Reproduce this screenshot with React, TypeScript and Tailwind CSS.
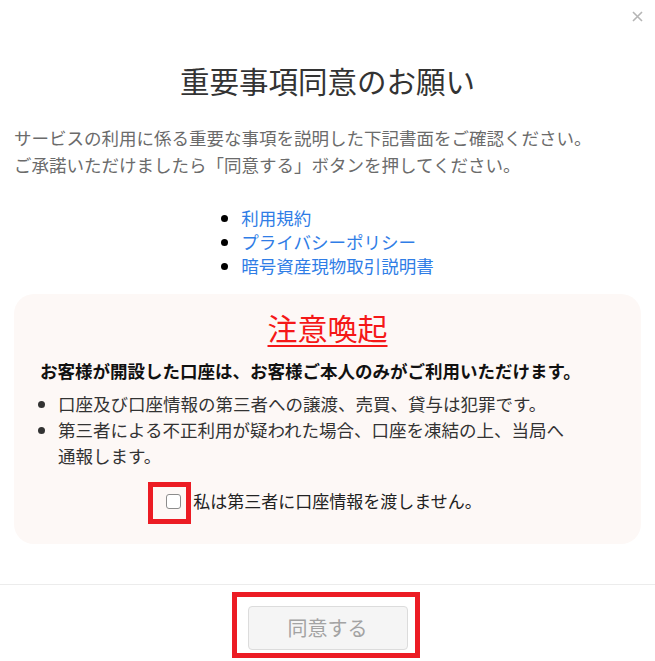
import React, { useState } from 'react';

const FONT = { fontFamily: '"Noto Sans CJK JP", "Noto Sans", sans-serif' };

const documents = ['利用規約', 'プライバシーポリシー', '暗号資産現物取引説明書'];

const notices = [
    '口座及び口座情報の第三者への譲渡、売買、貸与は犯罪です。',
    '第三者による不正利用が疑われた場合、口座を凍結の上、当局へ通報します。',
];

const CloseIcon: React.FC = () => (
    <svg width="11" height="11" viewBox="0 0 11 11" fill="none" stroke="#b5b5b5" strokeWidth="1.6">
        <path d="M1 1 L10 10 M10 1 L1 10" />
    </svg>
);

const App: React.FC = () => {
    const [agreed, setAgreed] = useState(false);

    return (
        <div className="w-[655px] h-[661px] bg-white overflow-hidden" style={FONT}>
            {/* Close button */}
            <div className="flex justify-end pt-[11px] pr-[12px] h-[22px]">
                <button className="leading-none"><CloseIcon /></button>
            </div>

            <h1 className="mt-[38px] text-center text-[29.5px] leading-[40px] font-normal text-[#333]">
                重要事項同意のお願い
            </h1>

            <p className="mt-[24px] px-[14px] text-[17.5px] leading-[27px] text-[#6b6b6b]">
                サービスの利用に係る重要な事項を説明した下記書面をご確認ください。<br />
                ご承諾いただけましたら「同意する」ボタンを押してください。
            </p>

            {/* Documents */}
            <div className="mt-[28px] flex justify-center">
                <ul className="list-disc pl-[20px] text-[17.5px] leading-[24px] text-black">
                    {documents.map((doc) => (
                        <li key={doc}>
                            <a className="text-[#2f7de6] cursor-pointer">{doc}</a>
                        </li>
                    ))}
                </ul>
            </div>

            {/* Caution box */}
            <div className="mt-[16px] mx-[14px] h-[250px] rounded-[20px] bg-[#fdf8f6] px-[26px] pt-[13px]">
                <h2 className="text-center text-[30px] leading-[40px] text-[#f51818] underline decoration-2 underline-offset-[5px]">
                    注意喚起
                </h2>
                <p className="mt-[11px] text-[17.5px] leading-[26px] font-bold text-[#111]">
                    お客様が開設した口座は、お客様ご本人のみがご利用いただけます。
                </p>
                <ul className="mt-[7px] w-[536px] list-disc pl-[18px] text-[17.5px] leading-[26px] text-[#333]">
                    {notices.map((n) => (
                        <li key={n}>{n}</li>
                    ))}
                </ul>
                <div className="mt-[11px] h-[42px] flex justify-center items-center pr-[7px]">
                    <label className="flex items-center gap-[12px] cursor-pointer">
                        <span className="relative flex">
                            <input
                                type="checkbox"
                                checked={agreed}
                                onChange={() => setAgreed(!agreed)}
                                className="appearance-none w-[15px] h-[15px] rounded-[3px] border border-[#8c8c8c] bg-white checked:bg-[#2f7de6]"
                            />
                            <span className="absolute -left-[18px] -right-[10px] -top-[12px] -bottom-[15px] border-[5px] border-[#ec1c24] pointer-events-none" />
                        </span>
                        <span className="text-[17px] leading-[26px] text-[#222]">私は第三者に口座情報を渡しません。</span>
                    </label>
                </div>
            </div>

            {/* Footer */}
            <div className="mt-[40px] border-t border-[#ececec] flex justify-center pt-[21px]">
                <div className="relative">
                    <button
                        disabled={!agreed}
                        className="w-[160px] h-[44px] rounded-[4px] border border-[#dcdcdc] bg-[#f5f5f5] text-[20px] text-[#a3a3a3]"
                    >
                        同意する
                    </button>
                    <span className="absolute -left-[16px] -right-[12px] -top-[14px] -bottom-[8px] border-[5px] border-[#ec1c24] pointer-events-none" />
                </div>
            </div>
        </div>
    );
};

export default App;
